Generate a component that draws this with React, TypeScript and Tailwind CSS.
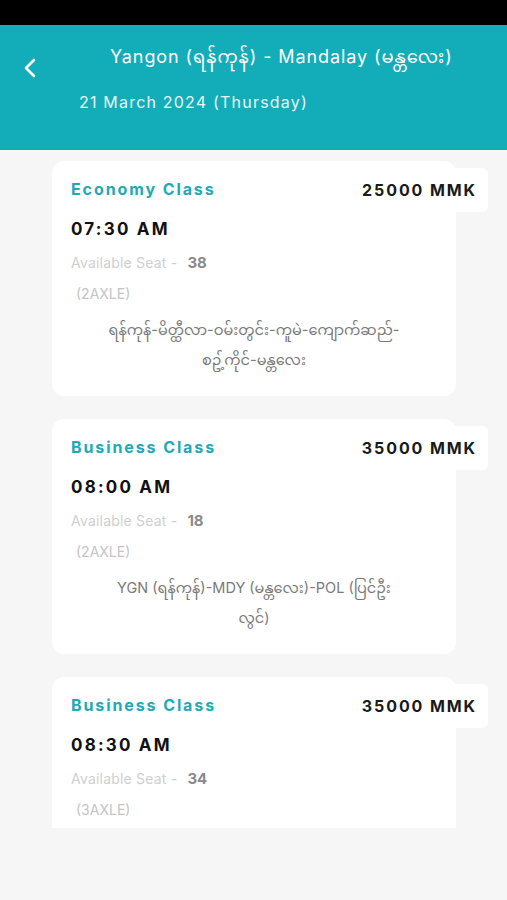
import React from "react";

type Trip = {
  cls: string;
  price: string;
  time: string;
  seat: string;
  axle: string;
  route: string[];
};

const trips: Trip[] = [
  {
    cls: "Economy Class",
    price: "25000 MMK",
    time: "07:30 AM",
    seat: "38",
    axle: "(2AXLE)",
    route: ["ရန်ကုန်-မိတ္ထီလာ-ဝမ်းတွင်း-ကူမဲ-ကျောက်ဆည်-", "စဥ့်ကိုင်-မန္တလေး"],
  },
  {
    cls: "Business Class",
    price: "35000 MMK",
    time: "08:00 AM",
    seat: "18",
    axle: "(2AXLE)",
    route: ["YGN (ရန်ကုန်)-MDY (မန္တလေး)-POL (ပြင်ဦး", "လွင်)"],
  },
  {
    cls: "Business Class",
    price: "35000 MMK",
    time: "08:30 AM",
    seat: "34",
    axle: "(3AXLE)",
    route: [],
  },
];

const font = {
  fontFamily:
    'Inter, "Noto Sans", "Noto Sans Myanmar", Padauk, "Myanmar Text", sans-serif',
};

function Card({ t, last }: { t: Trip; last?: boolean }) {
  return (
    <div
      className={`relative w-[404px] bg-white ${
        last ? "rounded-t-[12px]" : "rounded-[12px] pb-[21px]"
      }`}
    >
      <div className="absolute right-[-32px] top-[7px] flex h-[44px] items-center rounded-[6px] bg-white pl-[12px] pr-[11px]">
        <span className="text-[16px] font-bold tracking-[1.9px] text-[#1a1a1a]">
          {t.price}
        </span>
      </div>
      <div className="pl-[19px] pt-[16px]">
        <div className="h-[24px] text-[16px] font-bold leading-[24px] tracking-[1.9px] text-[#1eaab6]">
          {t.cls}
        </div>
        <div className="mt-[16px] h-[24px] text-[17px] font-bold leading-[24px] tracking-[2.2px] text-[#111]">
          {t.time}
        </div>
        <div className="mt-[12px] flex h-[20px] items-center leading-[20px]">
          <span className="text-[14px] tracking-[0.2px] text-[#cfcfcf]">Available Seat -</span>
          <span className="ml-[10px] text-[15px] font-bold text-[#8a8a8a]">
            {t.seat}
          </span>
        </div>
        <div className="mt-[11px] h-[20px] pl-[5px] text-[14px] leading-[20px] text-[#c4c4c4]">
          {t.axle}
        </div>
      </div>
      {t.route.length > 0 ? (
        <div className="mt-[11px] text-center text-[14.5px] leading-[30px] text-[#7a7a7a]">
          {t.route.map((r, i) => (
            <div key={i}>{r}</div>
          ))}
        </div>
      ) : (
        <div className="h-[19px]" />
      )}
    </div>
  );
}

export default function App() {
  return (
    <div className="h-[900px] w-[507px] overflow-hidden bg-[#f6f6f6]" style={font}>
      <div className="h-[25px] bg-black" />
      <div className="relative h-[125px] bg-[#12adb9]">
        <div className="absolute left-[22px] top-[32px]">
          <svg width="18" height="22" viewBox="0 0 18 22" fill="none">
            <path
              d="M12 3 L4 11 L12 19"
              stroke="white"
              strokeWidth="2.6"
              strokeLinecap="round"
              strokeLinejoin="round"
            />
          </svg>
        </div>
        <div className="pl-[110px] pt-[18px] text-[18px] leading-[28px] tracking-[0.9px] text-white">
          Yangon (ရန်ကုန်) - Mandalay (မန္တလေး)
        </div>
        <div className="pl-[79px] pt-[21px] text-[16px] leading-[20px] tracking-[1.2px] text-white/90">
          21 March 2024 (Thursday)
        </div>
      </div>
      <div className="flex h-[678px] flex-col gap-[23px] overflow-hidden pl-[52px] pt-[11px]">
        {trips.map((t, i) => (
          <Card key={i} t={t} last={i === trips.length - 1} />
        ))}
      </div>
    </div>
  );
}
